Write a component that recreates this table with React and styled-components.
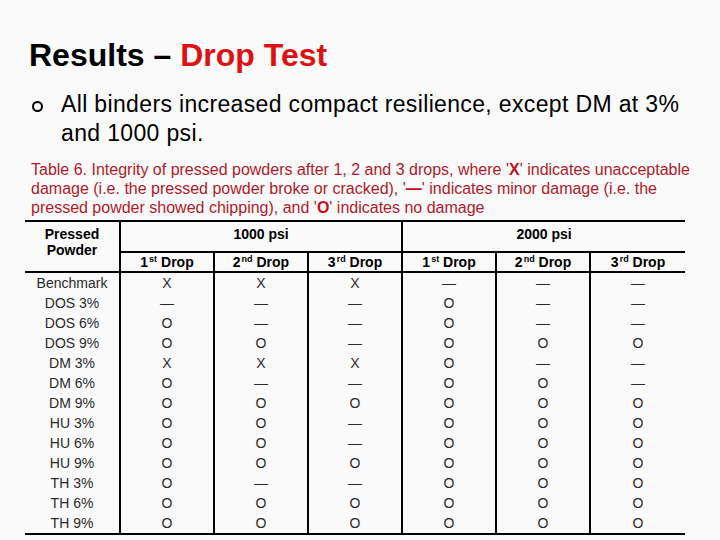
import React from "react";
import styled, { createGlobalStyle } from "styled-components";

const Global = createGlobalStyle`
  html, body { margin: 0; padding: 0; background: #fafafa; }
  body { font-family: "Liberation Sans", Arial, sans-serif; color: #000; }
`;

const Slide = styled.div`
  width: 720px;
  height: 540px;
  box-sizing: border-box;
  padding-top: 38px;
  overflow: hidden;
`;

const Title = styled.h1`
  margin: 0 0 0 29px;
  font-size: 32px;
  line-height: 34px;
  font-weight: bold;
  color: #000;
`;

const Red = styled.span`
  color: #dc1212;
`;

const BulletRow = styled.div`
  display: flex;
  align-items: flex-start;
  margin-top: 18px;
`;

const BulletMark = styled.span`
  flex: none;
  width: 7px;
  height: 7px;
  border: 2px solid #000;
  border-radius: 50%;
  margin: 11px 18px 0 32px;
`;

const BulletText = styled.p`
  margin: 0;
  font-size: 23px;
  letter-spacing: 0.35px;
  line-height: 29px;
  color: #000;
`;

const Caption = styled.p`
  margin: 12px 0 0 31px;
  font-size: 16px;
  line-height: 19px;
  color: #b01a2a;
`;

const Strong = styled.b`
  font-weight: bold;
  color: #c0101e;
`;

const Table = styled.table`
  margin: 3px 0 0 25px;
  width: 660px;
  table-layout: fixed;
  border-collapse: collapse;
  font-size: 14px;
  border-top: 2px solid #000;
  border-bottom: 2px solid #000;
`;

const HeadCell = styled.th`
  padding: 0;
  height: ${(p) => p.$h || 18}px;
  font-weight: bold;
  font-size: 14px;
  text-align: center;
  vertical-align: ${(p) => p.$valign || "middle"};
  padding-top: ${(p) => p.$pt || 0}px;
  line-height: 16px;
  border-left: ${(p) => (p.$noLeft ? "none" : "2px solid #000")};
  border-bottom: 2px solid #000;
  color: #000;
`;

const Cell = styled.td`
  padding: 0;
  height: 20px;
  text-align: center;
  vertical-align: middle;
  line-height: 20px;
  color: #2a2a2a;
  border-left: ${(p) => (p.$first ? "none" : "2px solid #000")};
`;

const Sup = styled.sup`
  font-size: 9px;
  line-height: 0;
  vertical-align: 5px;
  font-weight: bold;
  margin-left: 1px;
`;

const rows = [
  ["Benchmark", "X", "X", "X", "—", "—", "—"],
  ["DOS 3%", "—", "—", "—", "O", "—", "—"],
  ["DOS 6%", "O", "—", "—", "O", "—", "—"],
  ["DOS 9%", "O", "O", "—", "O", "O", "O"],
  ["DM 3%", "X", "X", "X", "O", "—", "—"],
  ["DM 6%", "O", "—", "—", "O", "O", "—"],
  ["DM 9%", "O", "O", "O", "O", "O", "O"],
  ["HU 3%", "O", "O", "—", "O", "O", "O"],
  ["HU 6%", "O", "O", "—", "O", "O", "O"],
  ["HU 9%", "O", "O", "O", "O", "O", "O"],
  ["TH 3%", "O", "—", "—", "O", "O", "O"],
  ["TH 6%", "O", "O", "O", "O", "O", "O"],
  ["TH 9%", "O", "O", "O", "O", "O", "O"],
];

const drops = [
  ["1", "st"],
  ["2", "nd"],
  ["3", "rd"],
];

export default function App() {
  return (
    <>
      <Global />
      <Slide>
        <Title>
          Results – <Red>Drop Test</Red>
        </Title>
        <BulletRow>
          <BulletMark />
          <BulletText>
            All binders increased compact resilience, except DM at 3%
            <br />
            and 1000 psi.
          </BulletText>
        </BulletRow>
        <Caption>
          Table 6. Integrity of pressed powders after 1, 2 and 3 drops, where '<Strong>X</Strong>' indicates unacceptable
          <br />
          damage (i.e. the pressed powder broke or cracked), '<Strong>—</Strong>' indicates minor damage (i.e. the
          <br />
          pressed powder showed chipping), and '<Strong>O</Strong>' indicates no damage
        </Caption>
        <Table>
          <colgroup>
            <col style={{ width: 95 }} />
            <col style={{ width: 94 }} />
            <col style={{ width: 94 }} />
            <col style={{ width: 94 }} />
            <col style={{ width: 94 }} />
            <col style={{ width: 94 }} />
            <col style={{ width: 95 }} />
          </colgroup>
          <thead>
            <tr>
              <HeadCell rowSpan={2} $noLeft $valign="top" $pt={4}>
                Pressed
                <br />
                Powder
              </HeadCell>
              <HeadCell colSpan={3} $h={25} $valign="top" $pt={4}>
                1000 psi
              </HeadCell>
              <HeadCell colSpan={3} $h={25} $valign="top" $pt={4}>
                2000 psi
              </HeadCell>
            </tr>
            <tr>
              {[0, 1].flatMap((g) =>
                drops.map(([n, s]) => (
                  <HeadCell key={g + n} $h={18}>
                    {n}
                    <Sup>{s}</Sup> Drop
                  </HeadCell>
                ))
              )}
            </tr>
          </thead>
          <tbody>
            {rows.map((r) => (
              <tr key={r[0]}>
                {r.map((v, i) => (
                  <Cell key={i} $first={i === 0}>
                    {v}
                  </Cell>
                ))}
              </tr>
            ))}
          </tbody>
        </Table>
      </Slide>
    </>
  );
}
